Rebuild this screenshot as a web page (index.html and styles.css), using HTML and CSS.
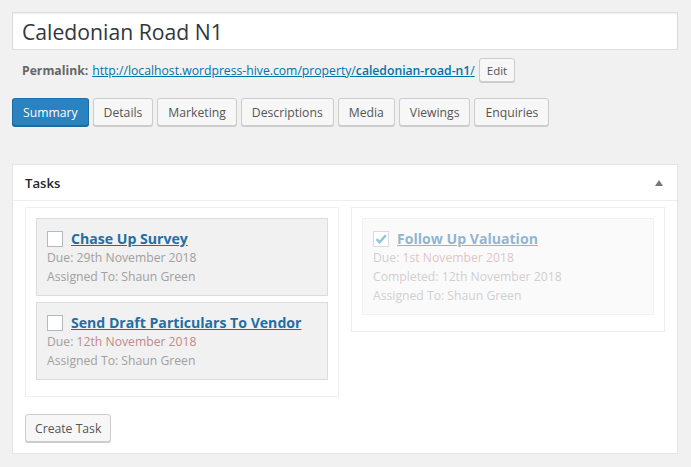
FILE: index.html
```html
<!DOCTYPE html>
<html lang="en">
<head>
    <meta charset="UTF-8">
    <title>Caledonian Road N1</title>
    <link rel="stylesheet" href="styles.css">
</head>
<body>
    <!-- title -->
    <div class="title-wrap">
        <input class="title-input" type="text" value="Caledonian Road N1">
    </div>
    <div class="permalink">
        <strong>Permalink:</strong>
        <a href="#">http://localhost.wordpress-hive.com/property/<span class="slug">caledonian-road-n1</span>/</a>
        <button class="btn btn-small">Edit</button>
    </div>

    <!-- tabs -->
    <div class="tabs">
        <button class="btn btn-primary">Summary</button>
        <button class="btn">Details</button>
        <button class="btn">Marketing</button>
        <button class="btn">Descriptions</button>
        <button class="btn">Media</button>
        <button class="btn">Viewings</button>
        <button class="btn">Enquiries</button>
    </div>

    <!-- tasks box -->
    <div class="postbox">
        <div class="postbox-head">
            <h2>Tasks</h2>
            <span class="toggle"></span>
        </div>
        <div class="postbox-body">
            <div class="task-columns">
                <div class="task-col">
                    <div class="task">
                        <div class="task-title"><span class="check"></span><a href="#">Chase Up Survey</a></div>
                        <div class="task-meta">Due: 29th November 2018</div>
                        <div class="task-meta">Assigned To: Shaun Green</div>
                    </div>
                    <div class="task">
                        <div class="task-title"><span class="check"></span><a href="#">Send Draft Particulars To Vendor</a></div>
                        <div class="task-meta">Due: <span class="overdue">12th November 2018</span></div>
                        <div class="task-meta">Assigned To: Shaun Green</div>
                    </div>
                </div>
                <div class="task-col">
                    <div class="task task-done">
                        <div class="task-title">
                            <span class="check">
                                <svg width="14" height="14" viewBox="0 0 14 14"><path d="M2.5 7.2 L5.6 10.2 L11.8 3.2" fill="none" stroke="#1e8cbe" stroke-width="2.4"/></svg>
                            </span><a href="#">Follow Up Valuation</a>
                        </div>
                        <div class="task-meta">Due: <span class="overdue">1st November 2018</span></div>
                        <div class="task-meta">Completed: 12th November 2018</div>
                        <div class="task-meta">Assigned To: Shaun Green</div>
                    </div>
                </div>
            </div>
            <button class="btn btn-create">Create Task</button>
        </div>
    </div>
</body>
</html>
```

FILE: styles.css
```css
* {
    box-sizing: border-box;
    margin: 0;
    padding: 0;
}
body {
    font-family: 'Open Sans', 'Noto Sans', sans-serif;
    background-color: #f1f1f1;
    color: #444;
    font-size: 12.2px;
    padding: 12px 14px 0 12px;
}
/* title */
.title-input {
    display: block;
    width: 666px;
    height: 38px;
    padding: 2px 9px;
    border: 1px solid #ddd;
    background: #fff;
    font-family: inherit;
    font-size: 21.2px;
    color: #32373c;
    box-shadow: inset 0 1px 2px rgba(0,0,0,0.07);
    outline: none;
}
.permalink {
    display: flex;
    align-items: center;
    height: 24px;
    margin-top: 8px;
    padding-left: 10px;
    color: #666;
}
.permalink strong {
    margin-right: 4px;
}
.permalink a {
    color: #0073aa;
}
.permalink .slug {
    font-weight: 600;
}
/* buttons */
.btn {
    font-family: inherit;
    font-size: 12.2px;
    color: #555;
    background: #f7f7f7;
    border: 1px solid #ccc;
    border-radius: 3px;
    box-shadow: 0 1px 0 #ccc;
    height: 28px;
    padding: 0 10px;
    cursor: pointer;
}
.btn-small {
    height: 24px;
    padding: 0 7px;
    font-size: 11.5px;
    margin-left: 4px;
}
.btn-primary {
    background: #2a82be;
    border-color: #1f72ab #1b6aa0 #1b6aa0;
    box-shadow: 0 1px 0 #1b6aa0;
    color: #fff;
}
.tabs {
    display: flex;
    gap: 4px;
    margin-top: 16px;
}
/* postbox */
.postbox {
    margin-top: 38px;
    width: 666px;
    background: #fff;
    border: 1px solid #e5e5e5;
    box-shadow: 0 1px 1px rgba(0,0,0,0.04);
}
.postbox-head {
    display: flex;
    align-items: center;
    justify-content: space-between;
    height: 36px;
    padding: 0 12px;
    border-bottom: 1px solid #eee;
}
.postbox-head h2 {
    font-size: 13.2px;
    font-weight: 600;
    color: #23282d;
}
.toggle {
    width: 0;
    height: 0;
    border-left: 4px solid transparent;
    border-right: 4px solid transparent;
    border-bottom: 6px solid #72777c;
    margin-right: 2px;
}
.postbox-body {
    padding: 6px 12px 11px 12px;
}
.task-columns {
    display: flex;
    gap: 12px;
    align-items: flex-start;
}
.task-col {
    width: 314px;
    border: 1px solid #eee;
    padding: 10px;
}
.task {
    background: #f1f1f1;
    border: 1px solid #ddd;
    padding: 10px 10px 9px 10px;
    margin-bottom: 6px;
}
.task-title {
    display: flex;
    align-items: center;
    height: 19px;
}
.task-title a {
    font-size: 14.1px;
    font-weight: 700;
    color: #1f6ea5;
}
.check {
    display: inline-flex;
    align-items: center;
    justify-content: center;
    width: 16px;
    height: 16px;
    border: 1px solid #b4b9be;
    background: #fff;
    margin-right: 8px;
}
.task-meta {
    color: #a0a0a0;
    line-height: 19px;
}
.overdue {
    color: #c08a8a;
}
.task-done {
    background: #f7f7f7;
    border-color: #e5e5e5;
    opacity: 0.5;
}
.btn-create {
    margin-top: 17px;
    height: 28px;
    padding: 0 9px;
}
```
